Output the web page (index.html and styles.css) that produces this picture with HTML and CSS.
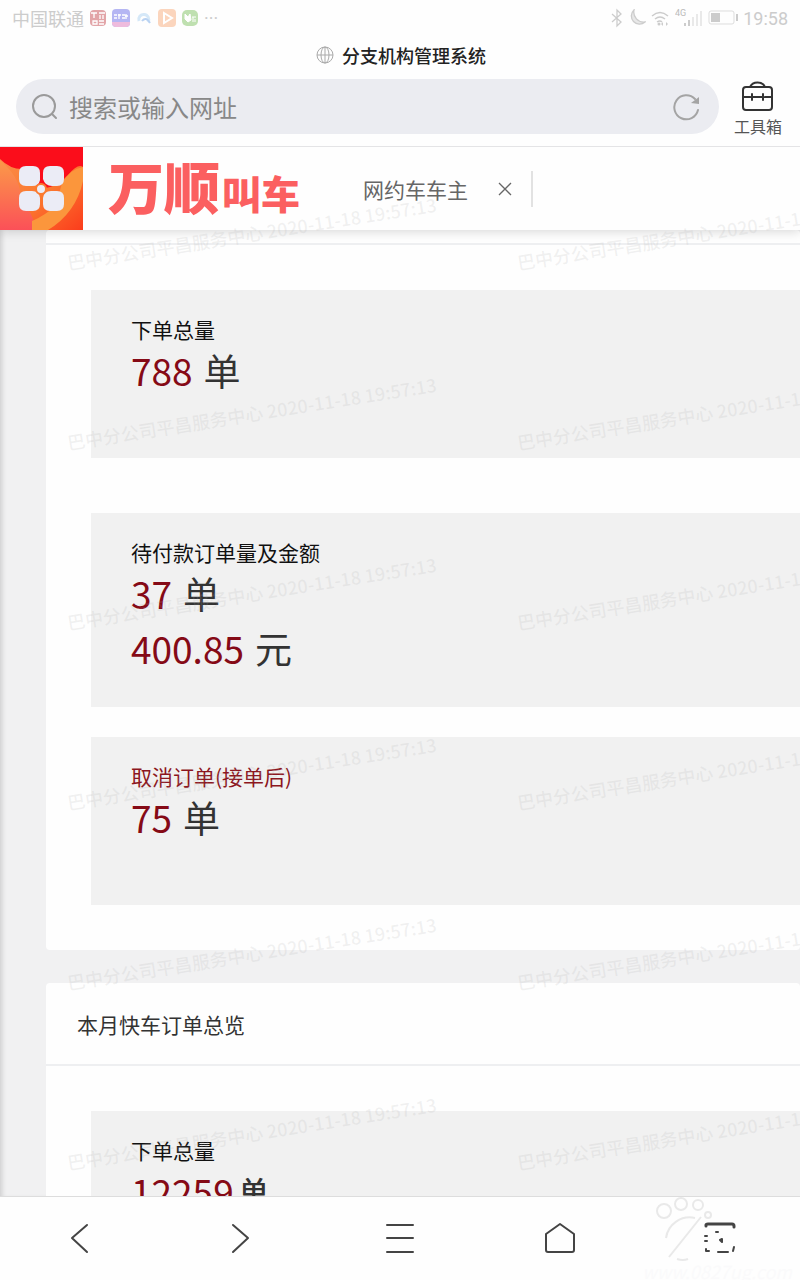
FILE: index.html
```
<!DOCTYPE html>
<html lang="zh-CN">
<head>
    <meta charset="UTF-8">
    <meta name="viewport" content="width=device-width, initial-scale=1.0">
    <title>分支机构管理系统</title>
    <link rel="stylesheet" href="styles.css">
</head>
<body>

<div class="status-bar">
    <div class="status-left">
        <span>中国联通</span>
        <svg class="app-icon" viewBox="0 0 18 18"><rect x="1" y="1" width="16" height="16" rx="4" fill="#e2a5a8"/><path d="M2 4h6M5 4v5M10 4h6M11 6v4M14 6v4M4 12h4v3h-4zM10 12h5M10 15h5" stroke="#fff" stroke-width="1.3" fill="none"/></svg>
        <svg class="app-icon" viewBox="0 0 18 18"><rect width="18" height="18" rx="4" fill="#b5b6f3"/><path d="M0 13h18v2q-1 3-4 3H4q-3 0-4-3z" fill="#eebbdd"/><path d="M2 6h3M2 9h3M6 6h3M7 5v5M10 6h3M10 9h3M14 5v5M13 7h3" stroke="#fff" stroke-width="1.3"/></svg>
        <svg class="app-icon" viewBox="0 0 18 18"><path d="M4 12a5 5 0 1 1 9 1" fill="none" stroke="#d5e8f8" stroke-width="3"/><path d="M7 12q4-5 8 2" fill="none" stroke="#b9d2f2" stroke-width="2"/></svg>
        <svg class="app-icon" viewBox="0 0 18 18"><rect width="18" height="18" rx="4" fill="#fbd5bd"/><path d="M6 4l8 5-8 5z" fill="none" stroke="#fff" stroke-width="2"/></svg>
        <svg class="app-icon" viewBox="0 0 18 18"><rect x="1" y="1" width="16" height="16" rx="5" fill="#bfe0b0"/><path d="M4 5l3 3 2-3 1 6-3 2-3-3zM11 8h4M12 8v5M14 10v3" fill="#fff" stroke="#fff"/></svg>
        <span class="dots">···</span>
    </div>
    <div class="status-right">
        <svg width="12" height="20" viewBox="0 0 12 20"><path d="M1 6l9 8-4 4V2l4 4-9 8" fill="none" stroke="#ccc" stroke-width="1.3"/></svg>
        <svg width="18" height="18" viewBox="0 0 18 18"><path d="M6 1a8 8 0 1 0 11 12A10 10 0 0 1 6 1z" fill="#e8e8e8" stroke="#ccc" stroke-width="1.3"/></svg>
        <svg width="19" height="18" viewBox="0 0 19 18"><path d="M1 7q8-7 16 0M4 10q5-4 10 0M6 13q3-2 5 0" fill="none" stroke="#ccc" stroke-width="1.5"/><circle cx="8" cy="15" r="1.5" fill="#ccc"/><path d="M12 13v4l-2-2zM15 13v4l2-2z" fill="#ccc"/></svg>
        <svg width="28" height="20" viewBox="0 0 28 20"><text class="net-label" x="0" y="8">4G</text><path d="M10 15v3M14 12v6" stroke="#ccc" stroke-width="2"/><path d="M18 9v9M22 6v12M26 3v15" stroke="#e9e9e9" stroke-width="2"/></svg>
        <svg width="30" height="16" viewBox="0 0 30 16"><rect x="1" y="1" width="25" height="13" rx="2" fill="none" stroke="#ddd"/><rect x="3" y="3" width="9" height="9" fill="#ccc"/><path d="M29 4v7" stroke="#ccc" stroke-width="2"/></svg>
        <span>19:58</span>
    </div>
</div>

<div class="title-bar">
    <svg width="18" height="18" viewBox="0 0 18 18" fill="none" stroke="#aaa"><circle cx="9" cy="9" r="8"/><ellipse cx="9" cy="9" rx="4" ry="8"/><path d="M1 9h16M9 1v16"/></svg>
    <span>分支机构管理系统</span>
</div>

<div class="search-row">
    <form class="search-box">
        <svg width="26" height="28" viewBox="0 0 26 28" fill="none" stroke="#9a9a9a" stroke-width="2"><circle cx="12" cy="13" r="11"/><path d="M20 21l4 4" stroke-linecap="round"/></svg>
        <input type="text" placeholder="搜索或输入网址" aria-label="搜索或输入网址">
        <button type="button" class="icon-button" aria-label="刷新">
            <svg width="28" height="28" viewBox="0 0 28 28"><path d="M23 6A12 12 0 1 0 26 17" fill="none" stroke="#a4a4a4" stroke-width="2" stroke-linecap="round"/><path d="M19 10l8 1V4z" fill="#a4a4a4"/></svg>
        </button>
    </form>
    <button class="toolbox">
        <svg width="34" height="34" viewBox="0 0 34 34" fill="none" stroke="#333" stroke-width="2" stroke-linecap="round"><rect x="2" y="8" width="29" height="23" rx="3"/><path d="M9 8a8 7 0 0 1 15 0M2 18h7M13 18h7M24 18h7M11 15v6M22 15v6M10 18h13"/></svg>
        <span>工具箱</span>
    </button>
</div>

<div class="page">
    <header class="site-header">
        <svg class="logo" viewBox="0 0 83 83">
            <defs>
                <linearGradient id="logoBg" x1="0" y1="0" x2="1" y2="1">
                    <stop offset="0" stop-color="#fb8a48"/>
                    <stop offset="0.5" stop-color="#fb7a30"/>
                    <stop offset="1" stop-color="#fb3c1c"/>
                </linearGradient>
                <linearGradient id="logoWave" x1="0" y1="0" x2="0" y2="1">
                    <stop offset="0" stop-color="#fb9a48"/>
                    <stop offset="1" stop-color="#fb5058"/>
                </linearGradient>
            </defs>
            <rect width="83" height="83" fill="#fb0d1b"/>
            <path d="M0 12Q10 22 22 22L41 42Q58 40 68 28T83 20V83H0z" fill="url(#logoBg)"/>
            <path d="M0 13Q24 34 20 55Q32 62 36 83H0z" fill="url(#logoWave)"/>
            <path d="M83 20Q70 22 62 36L56 58Q46 68 32 74V83H48Q76 66 83 34z" fill="#fb963c"/>
            <g fill="#ebecf6">
                <path d="M26 19H33Q40 19 40 26V33Q39 39 32 39H26Q19 39 19 32V26Q19 19 26 19z"/>
                <path d="M57 19H50Q43 19 43 26V32Q45 39 52 39H57Q64 39 64 32V26Q64 19 57 19z"/>
                <path d="M26 64H33Q40 64 40 57V51Q39 44 32 44H26Q19 44 19 51V57Q19 64 26 64z"/>
                <path d="M57 64H50Q43 64 43 57V51Q44 44 51 44H57Q64 44 64 51V57Q64 64 57 64z"/>
                <circle cx="41" cy="42" r="5" stroke="#fb7a30" stroke-width="2"/>
            </g>
        </svg>
        <h1 class="brand">万顺<small>叫车</small></h1>
        <div class="tab">
            <a href="#">网约车车主</a>
            <button class="icon-button" aria-label="关闭">
                <svg width="14" height="14" viewBox="0 0 14 14"><path d="M1 1l12 12M13 1L1 13" stroke="#666" stroke-width="1.3"/></svg>
            </button>
        </div>
    </header>

    <main class="content">
        <section class="card">
            <div class="card-head card-head-cut"></div>
            <div class="card-body">
                <div class="stat stat-first">
                    <p class="label">下单总量</p>
                    <p class="value"><b>788</b><span>单</span></p>
                </div>
                <div class="stat">
                    <p class="label">待付款订单量及金额</p>
                    <p class="value"><b>37</b><span>单</span></p>
                    <p class="value"><b>400.85</b><span>元</span></p>
                </div>
                <div class="stat">
                    <p class="label label-red">取消订单(接单后)</p>
                    <p class="value"><b>75</b><span>单</span></p>
                </div>
            </div>
        </section>

        <section class="card">
            <h2 class="card-head">本月快车订单总览</h2>
            <div class="card-body">
                <div class="stat">
                    <p class="label">下单总量</p>
                    <p class="value"><b>12259</b><small>单</small></p>
                </div>
            </div>
        </section>
    </main>

    <div class="watermark" id="watermark" aria-hidden="true"></div>
</div>

<nav class="bottom-nav">
    <button aria-label="后退"><svg viewBox="0 0 34 34"><path d="M24 4L9 17l15 14"/></svg></button>
    <button aria-label="前进"><svg viewBox="0 0 34 34"><path d="M10 4l15 13-15 14"/></svg></button>
    <button aria-label="菜单"><svg viewBox="0 0 34 34"><path d="M4 4h26M4 17h26M4 31h26"/></svg></button>
    <button aria-label="主页"><svg viewBox="0 0 34 34"><path d="M3 13L17 3l14 10v16q0 2-2 2H5q-2 0-2-2z"/></svg></button>
    <button aria-label="窗口"><svg viewBox="0 0 34 34"><path d="M3 5V4q0-1 2-1h24q2 0 2 2v1" stroke-width="3"/><path d="M3 28v2h3M15 31h10M31 26l-1 4M2 15h2M2 20h2M13 11h2"/><path d="M19 18l-2 1 2 2z"/></svg></button>
    <div class="site-mark" aria-hidden="true">
        <svg viewBox="0 0 100 66" fill="none" stroke="#e9e9e9" stroke-width="2">
            <circle cx="12" cy="15" r="7"/><circle cx="29" cy="8" r="6"/><circle cx="46" cy="9" r="5"/><circle cx="56" cy="19" r="3"/>
            <path d="M43 22A24 24 0 0 0 14 42M49 21L17 61M25 63q6 2 11 0"/>
        </svg>
        <span>www.0827ug.com</span>
    </div>
</nav>

<script>
    const watermark = document.getElementById("watermark");

    for (let i = 0; i < 12; i++) {
        const mark = document.createElement("span");
        mark.textContent = "巴中分公司平昌服务中心 2020-11-18 19:57:13";
        watermark.appendChild(mark);
    }
</script>

</body>
</html>
```
FILE: styles.css
```
* {
    box-sizing: border-box;
}
body {
    font-family: "Noto Sans CJK SC", sans-serif;
    margin: 0;
    height: 100vh;
    display: flex;
    flex-direction: column;
    overflow: hidden;
    background-color: #fefefe;
    color: #333;
}
h1, h2, p {
    margin: 0;
    font-weight: normal;
}
button {
    font-family: inherit;
    background: none;
    border: none;
    padding: 0;
    cursor: pointer;
}
svg {
    display: block;
    flex: none;
}
.status-bar {
    display: flex;
    justify-content: space-between;
    align-items: center;
    height: 36px;
    padding: 0 12px;
    color: #ccc;
    font-size: 18px;
}
.status-left {
    display: flex;
    align-items: center;
    gap: 5px;
}
.status-right {
    display: flex;
    align-items: center;
    gap: 5px;
    font-family: Roboto, sans-serif;
}
.app-icon {
    width: 18px;
    height: 18px;
}
.dots {
    font-family: Roboto, sans-serif;
}
.net-label {
    font-size: 9px;
    fill: #bbb;
}
.title-bar {
    display: flex;
    justify-content: center;
    align-items: center;
    gap: 8px;
    height: 38px;
    padding-left: 2px;
    font-size: 18px;
    font-weight: 500;
    color: #222;
}
.search-row {
    display: flex;
    gap: 14px;
    height: 73px;
    padding: 5px 17px 0 16px;
    border-bottom: 1px solid #e4e4e6;
}
.search-box {
    flex: 1;
    display: flex;
    align-items: center;
    height: 55px;
    padding: 0 19px 0 16px;
    border-radius: 28px;
    background-color: #ebecf1;
}
.search-box input {
    flex: 1;
    min-width: 0;
    padding: 0 11px;
    border: none;
    outline: none;
    background: none;
    font-family: inherit;
    font-size: 24px;
}
.search-box input::placeholder {
    color: #888;
}
.toolbox {
    display: flex;
    flex-direction: column;
    align-items: center;
    width: 50px;
    font-size: 16px;
    line-height: 26px;
    color: #555;
}
.page {
    position: relative;
    flex: 1;
    min-height: 0;
    display: flex;
    flex-direction: column;
    overflow: hidden;
}
.site-header {
    position: relative;
    z-index: 1;
    flex: none;
    display: flex;
    align-items: center;
    height: 83px;
    background-color: #fefefe;
    box-shadow: 0 2px 10px rgba(0, 0, 0, 0.15);
}
.logo {
    width: 83px;
    height: 83px;
}
.brand {
    margin-left: 25px;
    font-size: 56px;
    font-weight: 900;
    line-height: 83px;
    color: #fb5f60;
}
.brand small {
    margin-left: 2px;
    font-size: 39px;
}
.tab {
    display: flex;
    align-items: center;
    gap: 30px;
    height: 36px;
    margin-left: 63px;
    padding-right: 19px;
    border-right: 2px solid #e2e2e2;
}
.tab a {
    font-size: 21px;
    line-height: 28px;
    color: #666;
    text-decoration: none;
}
.content {
    flex: 1;
    min-height: 0;
    overflow: hidden;
    padding-left: 46px;
    background-color: #f1f1f2;
    box-shadow: inset 5px 0 5px -3px rgba(0, 0, 0, 0.15);
}
.card {
    margin-bottom: 33px;
    border-radius: 4px;
    background-color: #fefefe;
}
.card-head {
    height: 83px;
    padding-left: 31px;
    border-bottom: 2px solid #eeeff1;
    font-size: 21px;
    line-height: 82px;
}
.card-head-cut {
    height: 15px;
}
.card-body {
    padding: 45px 0 45px 45px;
}
.stat {
    min-height: 168px;
    margin-bottom: 30px;
    padding: 25px 40px 31px;
    background-color: #f1f1f1;
}
.stat:last-child {
    margin-bottom: 0;
}
.stat-first {
    margin-bottom: 55px;
}
.label {
    font-size: 21px;
    line-height: 28px;
    color: #111;
}
.label-red {
    color: #8c1620;
}
.value {
    display: flex;
    gap: 11px;
    font-size: 37px;
    line-height: 55px;
}
.value b {
    font-weight: normal;
    color: #850a16;
}
.value small {
    margin-left: -6px;
    font-size: 30px;
    font-weight: 500;
    line-height: 52px;
}
.watermark {
    position: absolute;
    z-index: 2;
    top: -4px;
    left: 27px;
    display: grid;
    grid-template-columns: 450px 450px;
    grid-auto-rows: 180px;
    place-items: center;
    pointer-events: none;
    font-size: 18px;
    font-weight: 500;
    color: rgba(170, 170, 170, 0.16);
    white-space: nowrap;
}
.watermark span {
    transform: rotate(-9deg);
}
.bottom-nav {
    position: relative;
    flex: none;
    display: grid;
    grid-template-columns: repeat(5, 1fr);
    height: 84px;
    padding-bottom: 2px;
    border-top: 1px solid #ddd;
    background-color: #fefefe;
}
.bottom-nav button {
    display: flex;
    justify-content: center;
    align-items: center;
}
.bottom-nav button svg {
    width: 34px;
    height: 34px;
    fill: none;
    stroke: #444;
    stroke-width: 2;
    stroke-linecap: round;
    stroke-linejoin: round;
}
.site-mark {
    position: absolute;
    right: 8px;
    bottom: 0;
    pointer-events: none;
    font-size: 18px;
    font-style: italic;
    line-height: 18px;
    color: #fafafb;
}
.site-mark svg {
    width: 100px;
    height: 66px;
    margin-left: 10px;
}
```
